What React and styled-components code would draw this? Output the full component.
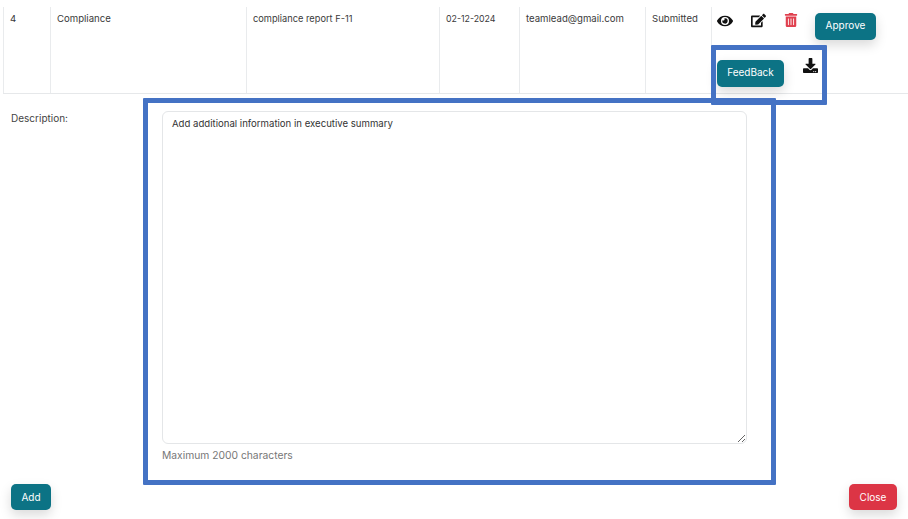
import React from 'react'
import styled, { createGlobalStyle } from 'styled-components'
import { FaEye, FaEdit, FaTrashAlt, FaDownload } from 'react-icons/fa'

const GlobalStyle = createGlobalStyle`
  html, body {
    margin: 0;
    padding: 0;
    background: #fff;
  }

  body {
    font-family: 'Inter', 'Open Sans', sans-serif;
    color: #333;
    overflow: hidden;
  }
`

const Page = styled.div`
  position: relative;
  width: 908px;
  height: 519px;
  overflow: hidden;
  display: flex;
  flex-direction: column;
`

const Table = styled.div`
  box-sizing: border-box;
  display: grid;
  grid-template-columns: 47px 196px 193px 80px 126px 66px 196px;
  height: 94px;
  margin-left: 3px;
  padding-top: 7px;
  border-bottom: 1px solid #e6e8ea;
`

const Cell = styled.div`
  padding: 6px 6px 0;
  font-size: ${(p) => p.$size || 9.6}px;
  line-height: 12px;
  color: #3a3a3a;
  border-left: 1px solid #e9ebed;
  white-space: nowrap;
`

const ActionCell = styled.div`
  border-left: 1px solid #e9ebed;
  padding: 6px 0 0 5px;
  display: grid;
  grid-template-columns: 98px 70px;
  grid-template-rows: 47px 27px;
`

const IconRow = styled.div`
  display: flex;
  align-items: flex-start;
`

const IconSlot = styled.span`
  width: ${(p) => p.$w}px;
  display: flex;
  color: ${(p) => p.$color || '#111'};
  font-size: ${(p) => p.$size}px;
`

const Button = styled.button`
  border: none;
  border-radius: 5px;
  padding: 0 0 ${(p) => p.$lift || 0}px;
  width: ${(p) => p.$w}px;
  height: ${(p) => p.$h}px;
  background: ${(p) => p.$bg || '#0c7385'};
  color: #fff;
  font-family: inherit;
  font-size: 10px;
  font-weight: 400;
  box-shadow: 0 5px 12px rgba(0, 0, 0, 0.15);
`

const DownloadSlot = styled.span`
  display: flex;
  margin: -2px 0 0 -12px;
  font-size: 15px;
  color: #111;
`

const FormRow = styled.div`
  display: flex;
  padding: 17px 0 0 11px;
`

const Label = styled.div`
  width: 151px;
  padding-top: 1px;
  font-size: 10px;
  line-height: 13px;
  color: #444;
`

const Field = styled.div`
  display: flex;
  flex-direction: column;
`

const TextArea = styled.textarea`
  box-sizing: border-box;
  width: 585px;
  height: 333px;
  margin: 0;
  padding: 5px 9px;
  border: 1px solid #e4e6e8;
  border-radius: 6px;
  outline: none;
  font-family: inherit;
  font-size: 9.6px;
  line-height: 13px;
  color: #333;
`

const Hint = styled.div`
  margin-top: 5px;
  font-size: 10.3px;
  line-height: 13px;
  color: #777;
`

const Footer = styled.div`
  display: flex;
  justify-content: space-between;
  padding: 22px 11px 0;
`

const Callout = styled.div`
  position: absolute;
  box-sizing: border-box;
  left: ${(p) => p.$x}px;
  top: ${(p) => p.$y}px;
  width: ${(p) => p.$w}px;
  height: ${(p) => p.$h}px;
  border: 5px solid #4472c4;
  border-radius: 1px;
  pointer-events: none;
`

export default function App() {
  return (
    <Page>
      <GlobalStyle />
      <Table>
        <Cell>4</Cell>
        <Cell>Compliance</Cell>
        <Cell $size={9.25}>compliance report F-11</Cell>
        <Cell $size={8.8}>02-12-2024</Cell>
        <Cell>teamlead@gmail.com</Cell>
        <Cell>Submitted</Cell>
        <ActionCell>
          <IconRow>
            <IconSlot $w={34} $size={16}><FaEye /></IconSlot>
            <IconSlot $w={33} $size={15}><FaEdit /></IconSlot>
            <IconSlot $w={20} $size={14} $color="#e0404f"><FaTrashAlt /></IconSlot>
          </IconRow>
          <Button $w={61} $h={27} $lift={4}>Approve</Button>
          <Button $w={67} $h={27} $lift={4}>FeedBack</Button>
          <DownloadSlot><FaDownload /></DownloadSlot>
        </ActionCell>
      </Table>
      <FormRow>
        <Label>Description:</Label>
        <Field>
          <TextArea defaultValue="Add additional information in executive summary" />
          <Hint>Maximum 2000 characters</Hint>
        </Field>
      </FormRow>
      <Footer>
        <Button $w={40} $h={26}>Add</Button>
        <Button $w={48} $h={26} $bg="#dc3545">Close</Button>
      </Footer>
      <Callout $x={143} $y={98} $w={633} $h={387} />
      <Callout $x={711} $y={45} $w={116} $h={60} />
    </Page>
  )
}
